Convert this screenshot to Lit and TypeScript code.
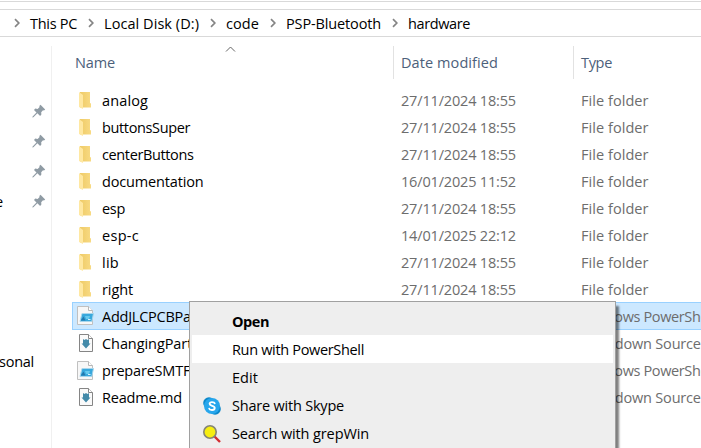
import { LitElement, html, css, nothing } from "lit";
import { customElement } from "lit/decorators.js";
import { styleMap } from "lit/directives/style-map.js";

const FAMILY = '"Open Sans", "Noto Sans", sans-serif';
const ctx = document.createElement("canvas").getContext("2d")!;

/** Tracks a label so that it takes up exactly `width` pixels. */
function label(text: string, width: number, size = 14.5, weight = 400) {
  ctx.font = `${weight} ${size}px ${FAMILY}`;
  const spacing = (width - ctx.measureText(text).width) / text.length;
  return html`<span style=${styleMap({ letterSpacing: `${spacing.toFixed(3)}px`, fontSize: `${size}px`, fontWeight: `${weight}` })}>${text}</span>`;
}

const chevron = html`<svg class="chev" width="7" height="10" viewBox="0 0 7 10"><path d="M1 1.2 4.800 5 1 8.8" fill="none" stroke="#858585" stroke-width="1.7"/></svg>`;

const pin = html`<svg class="pin" width="14" height="14" viewBox="0 0 14 14"><path d="M8.500 .8 13.2 5.500 12 6.500 11 6.300 9.200 8.300 9.400 10.500 8.100 11.900 5.400 9.300 1.400 13.200.3 13.500.6 12.400 4.500 8.400 2 6 3.300 4.600 5.600 5 7.600 3.100 7.300 1.900Z" fill="#8f9ba4"/></svg>`;

const icons: Record<string, unknown> = {
  folder: html`<svg width="18" height="20" viewBox="0 0 18 20">
    <defs><linearGradient id="f" x2="1"><stop stop-color="#efcb67"/><stop offset="1" stop-color="#f8da83"/></linearGradient></defs>
    <path d="M3 1H13V12L14 12.500V16.500H3Z" fill="url(#f)"/><path d="M2 1 6 4V18L2 16Z" fill="#ffe8a2"/></svg>`,
  ps: html`<svg width="18" height="20" viewBox="0 0 18 20">
    <path d="M.5 .5H11.500L15.500 4.500V18.500H.5Z" fill="#f7f7f7" stroke="#c0c0c0"/><path d="M11.500 .5V4.500H15.500" fill="#fff" stroke="#b7b7b7"/>
    <path d="M5 7.500H16.500L14.800 15.500H3Z" fill="#38a8dc" stroke="#a9d6ec"/><path d="M3.800 14.500 6.500 10.500 8.500 14.500Z" fill="#2378ad"/><path d="M8 10H13L12 13H9Z" fill="#66c9ee"/><path d="M11 13.500H13.500" fill="none" stroke="#d4f2ff"/></svg>`,
  md: html`<svg width="18" height="20" viewBox="0 0 18 20">
    <path d="M2.500 .5H11.500L15.500 4.500V17.500H2.500Z" fill="#fafafa" stroke="#858585"/><path d="M11.500 .5V4.500H15.500" fill="#fff" stroke="#858585"/>
    <path d="M6 5 7.500 6 9 5 10.500 6 12 5V9.500H13.500L9 14.500 4.500 9.500H6Z" fill="#438aa9"/></svg>`,
  skype: html`<svg width="18" height="18" viewBox="0 0 18 18"><circle cx="6" cy="6" r="5.800" fill="#0b87c9"/><circle cx="12" cy="12" r="5.800" fill="#0b87c9"/><circle cx="9" cy="9" r="8" fill="#27a6ec"/>
    <path d="M11.700 6.300C11.300 4.900 6.600 4.300 6.600 6.800 6.600 9.400 11.700 8.200 11.700 11 11.700 13.700 6.600 13.400 6.200 11.600" fill="none" stroke="#fff" stroke-width="1.900" stroke-linecap="round"/></svg>`,
  grep: html`<svg width="18" height="18" viewBox="0 0 18 18"><path d="M11.500 11.500 17 17" stroke="#d42d32" stroke-width="2.400"/><circle cx="7" cy="7" r="6.200" fill="#f7ee10" stroke="#858575" stroke-width="1.600"/></svg>`,
};

type Row = { icon: string; name: string; w: number; date?: string; type: string; tw: number; selected?: boolean };
const folder = (name: string, w: number, date = "27/11/2024 18:55"): Row => ({ icon: "folder", name, w, date, type: "File folder", tw: 67.5 });
const rows: Row[] = [
  folder("analog", 46), folder("buttonsSuper", 88), folder("centerButtons", 91.5),
  folder("documentation", 101.5, "16/01/2025 11:52"), folder("esp", 23), folder("esp-c", 37, "14/01/2025 22:12"),
  folder("lib", 17), folder("right", 31),
  { icon: "ps", name: "AddJLCPCBParts.ps1", w: 133, type: "Windows PowerShell Script", tw: 173.5, selected: true },
  { icon: "md", name: "ChangingParts.md", w: 123, type: "Markdown Source File", tw: 145.5 },
  { icon: "ps", name: "prepareSMTFiles.ps1", w: 137, type: "Windows PowerShell Script", tw: 173.5 },
  { icon: "md", name: "Readme.md", w: 80, type: "Markdown Source File", tw: 145.5 },
];

const crumbs: [string, number, number][] = [
  ["This PC", 30, 47], ["Local Disk (D:)", 104, 95], ["code", 226, 33], ["PSP-Bluetooth", 286, 95], ["hardware", 408, 62],
];

@customElement("context-menu")
class ContextMenu extends LitElement {
  static styles = css`
    :host { display: block; box-sizing: border-box; border: 1px solid #a0a0a0; background: #eee; padding: 5px 2px; box-shadow: 3px 5px 2px rgba(0, 0, 0, .5); color: #000; font-family: "Open Sans", "Noto Sans", sans-serif; }
    .item { display: grid; grid-template-columns: 40px 1fr; height: 28px; line-height: 28px; white-space: nowrap; }
    .hot { background: #fff; }
    .icon { display: flex; align-items: center; padding-left: 11px; }
  `;
  render() {
    const items: [string, number, string?][] = [["Open", 37], ["Run with PowerShell", 132], ["Edit", 26], ["Share with Skype", 112, "skype"], ["Search with grepWin", 137, "grep"]];
    return items.map(([t, w, icon], i) => html`<div class="item ${i === 1 ? "hot" : ""}"><div class="icon">${icon ? icons[icon] : nothing}</div><div>${label(t, w, 14.5, i === 0 ? 700 : 400)}</div></div>`);
  }
}

@customElement("app-root")
class AppRoot extends LitElement {
  static styles = css`
    :host { display: flex; flex-direction: column; position: relative; width: 701px; height: 448px; overflow: hidden; background: #fff; color: #000; font-family: "Open Sans", "Noto Sans", sans-serif; white-space: nowrap; }
    svg { display: block; flex: none; }
    .top { height: 9px; box-sizing: border-box; padding-top: 1px; }
    .top::after { content: ""; display: block; border-top: 1px solid #d9d9d9; }
    .address { display: flex; height: 28px; box-sizing: border-box; border: solid #d9d9d9; border-width: 1px 0; line-height: 27px; padding-left: 14px; }
    .crumb { display: flex; align-items: center; }
    .chev { margin: 0 9px 0 0; }
    .main { display: flex; flex: 1; min-height: 0; }
    .side { width: 52px; box-sizing: border-box; margin-top: 9px; border-right: 1px solid #f0f0f0; padding-top: 50px; flex: none; }
    .quick { display: flex; justify-content: flex-end; align-items: center; height: 30px; padding-right: 5px; }
    .quick span { margin-right: auto; margin-left: -5px; }
    .personal { margin: 131px 0 0 -1px; line-height: 28px; }
    .files { flex: 1; min-width: 0; }
    .head { display: grid; grid-template-columns: 318px 180px 1fr; margin: 9px 0 9px 23px; height: 32px; line-height: 33px; color: #4c607a; }
    .head div + div { border-left: 1px solid #e2e2e2; padding-left: 7px; }
    .sort { position: absolute; left: 225px; top: 46px; }
    .row { display: grid; grid-template-columns: 25px 299px 180px 1fr; box-sizing: border-box; height: 27px; line-height: 27px; align-items: center; margin-left: 20px; padding-left: 5px; color: #6d6d6d; }
    .name { color: #000; }
    .selected { background: #cce8ff; height: 28px; margin-top: -1px; box-shadow: inset 0 1px #99d1ff, inset 0 -1px #99d1ff, inset 1px 0 #99d1ff; }
    context-menu { position: absolute; left: 189px; top: 301px; width: 427px; height: 180px; }
  `;
  render() {
    return html`
      <div class="top"></div>
      <div class="address">${crumbs.map(([t, x, w], i) => {
        const next = crumbs[i + 1];
        return html`<div class="crumb" style=${styleMap({ width: next ? `${next[1] - x}px` : "90px" })}>${chevron}${label(t, w)}</div>`;
      })}</div>
      <div class="main">
        <div class="side">
          ${[0, 1, 2, 3].map((i) => html`<div class="quick">${i === 3 ? label("e", 8) : nothing}${pin}</div>`)}
          <div class="personal">${label("sonal", 35)}</div>
        </div>
        <div class="files">
          <div class="head"><div>${label("Name", 40)}</div><div>${label("Date modified", 97)}</div><div>${label("Type", 31)}</div></div>
          ${rows.map((r) => html`<div class="row ${r.selected ? "selected" : ""}">${icons[r.icon]}<div class="name">${label(r.name, r.w)}</div><div>${r.date ? label(r.date, 115) : nothing}</div><div>${label(r.type, r.tw)}</div></div>`)}
        </div>
      </div>
      <svg class="sort" width="11" height="7" viewBox="0 0 11 7"><path d="M1 5.500 5.500 1 10 5.500" fill="none" stroke="#666"/></svg>
      <context-menu></context-menu>`;
  }
}
